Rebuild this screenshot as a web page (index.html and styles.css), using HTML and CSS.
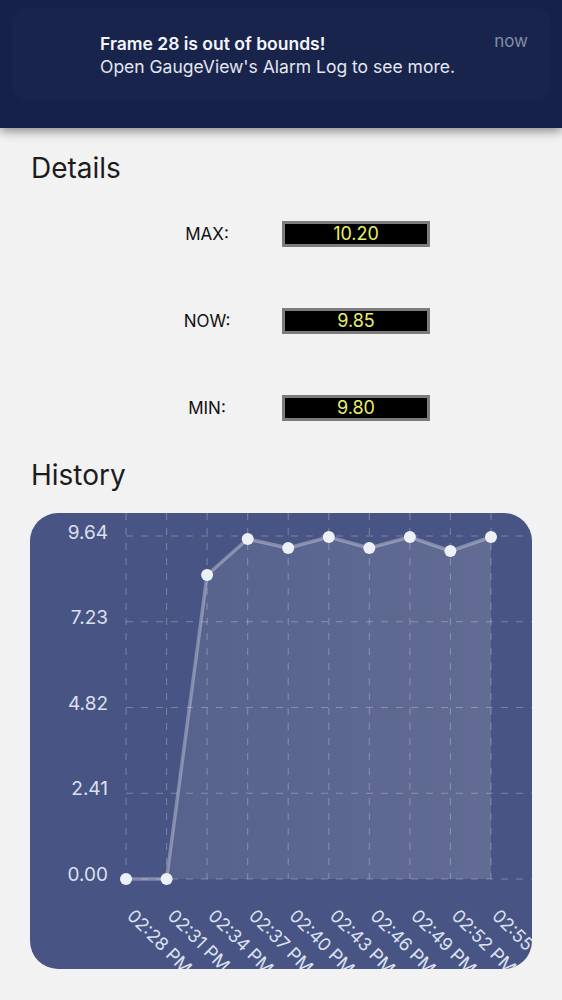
FILE: index.html
```html
<!DOCTYPE html>
<html lang="en">
<head>
    <meta charset="UTF-8">
    <meta name="viewport" content="width=device-width, initial-scale=1.0">
    <title>GaugeView - Frame 28</title>
    <link rel="stylesheet" href="styles.css">
</head>
<body>

<header class="banner">
    <div class="banner-card">
        <div class="banner-text">
            <div class="banner-title">Frame 28 is out of bounds!</div>
            <div class="banner-body">Open GaugeView's Alarm Log to see more.</div>
        </div>
        <div class="banner-time">now</div>
    </div>
</header>

<main class="content">
    <h2 class="section-title">Details</h2>

    <div class="readings">
        <div class="reading">
            <span class="reading-label">MAX:</span>
            <span class="reading-value">10.20</span>
        </div>
        <div class="reading">
            <span class="reading-label">NOW:</span>
            <span class="reading-value">9.85</span>
        </div>
        <div class="reading">
            <span class="reading-label">MIN:</span>
            <span class="reading-value">9.80</span>
        </div>
    </div>

    <h2 class="section-title history-title">History</h2>

    <div class="chart-card">
        <svg class="chart" width="502" height="456" viewBox="0 0 502 456">
            <defs>
                <linearGradient id="areaFill" x1="0" y1="0" x2="1" y2="0">
                    <stop offset="0" stop-color="#ffffff" stop-opacity="0.08"/>
                    <stop offset="1" stop-color="#ffffff" stop-opacity="0.14"/>
                </linearGradient>
            </defs>

            <!-- vertical grid -->
            <g class="grid">
                <line x1="96" y1="0" x2="96" y2="366"/>
                <line x1="136.6" y1="0" x2="136.6" y2="366"/>
                <line x1="177.1" y1="0" x2="177.1" y2="366"/>
                <line x1="217.7" y1="0" x2="217.7" y2="366"/>
                <line x1="258.2" y1="0" x2="258.2" y2="366"/>
                <line x1="298.8" y1="0" x2="298.8" y2="366"/>
                <line x1="339.3" y1="0" x2="339.3" y2="366"/>
                <line x1="379.9" y1="0" x2="379.9" y2="366"/>
                <line x1="420.4" y1="0" x2="420.4" y2="366"/>
                <line x1="461" y1="0" x2="461" y2="366"/>
            </g>

            <!-- horizontal grid -->
            <g class="grid">
                <line x1="96" y1="23" x2="502" y2="23"/>
                <line x1="96" y1="108.75" x2="502" y2="108.75"/>
                <line x1="96" y1="194.5" x2="502" y2="194.5"/>
                <line x1="96" y1="280.25" x2="502" y2="280.25"/>
                <line x1="96" y1="366" x2="502" y2="366"/>
            </g>

            <polygon class="area" points="136.6,366 177.1,62 217.7,26 258.2,35 298.8,24 339.3,35 379.9,24 420.4,38 461,24 461,366"/>
            <polyline class="line" points="96,366 136.6,366 177.1,62 217.7,26 258.2,35 298.8,24 339.3,35 379.9,24 420.4,38 461,24"/>

            <g class="dots">
                <circle cx="96" cy="366" r="6"/>
                <circle cx="136.6" cy="366" r="6"/>
                <circle cx="177.1" cy="62" r="6"/>
                <circle cx="217.7" cy="26" r="6"/>
                <circle cx="258.2" cy="35" r="6"/>
                <circle cx="298.8" cy="24" r="6"/>
                <circle cx="339.3" cy="35" r="6"/>
                <circle cx="379.9" cy="24" r="6"/>
                <circle cx="420.4" cy="38" r="6"/>
                <circle cx="461" cy="24" r="6"/>
            </g>

            <g class="y-labels">
                <text x="78" y="21">9.64</text>
                <text x="78" y="106">7.23</text>
                <text x="78" y="192">4.82</text>
                <text x="78" y="277">2.41</text>
                <text x="78" y="363">0.00</text>
            </g>

            <g class="x-labels">
                <text x="96" y="404" transform="rotate(45 96 404)">02:28 PM</text>
                <text x="136.6" y="404" transform="rotate(45 136.6 404)">02:31 PM</text>
                <text x="177.1" y="404" transform="rotate(45 177.1 404)">02:34 PM</text>
                <text x="217.7" y="404" transform="rotate(45 217.7 404)">02:37 PM</text>
                <text x="258.2" y="404" transform="rotate(45 258.2 404)">02:40 PM</text>
                <text x="298.8" y="404" transform="rotate(45 298.8 404)">02:43 PM</text>
                <text x="339.3" y="404" transform="rotate(45 339.3 404)">02:46 PM</text>
                <text x="379.9" y="404" transform="rotate(45 379.9 404)">02:49 PM</text>
                <text x="420.4" y="404" transform="rotate(45 420.4 404)">02:52 PM</text>
                <text x="461" y="404" transform="rotate(45 461 404)">02:55 PM</text>
            </g>
        </svg>
    </div>
</main>

</body>
</html>
```

FILE: styles.css
```css
* {
    box-sizing: border-box;
}
body {
    margin: 0;
    font-family: Inter, 'Noto Sans', sans-serif;
    background-color: #f2f2f2;
    width: 562px;
    height: 1000px;
    overflow: hidden;
}

/* notification banner */
.banner {
    height: 128px;
    background-color: #16214a;
    box-shadow: 0 3px 10px rgba(0,0,0,0.45);
    padding: 8px 12px 0;
    position: relative;
}
.banner-card {
    display: flex;
    justify-content: space-between;
    height: 92px;
    padding: 24px 22px 0 88px;
    border-radius: 14px;
    background: rgba(255,255,255,0.015);
}
.banner-title {
    color: #f4f5f9;
    font-size: 17.5px;
    font-weight: 600;
    line-height: 23px;
}
.banner-body {
    color: #e3e6ef;
    font-size: 17.5px;
    line-height: 23px;
}
.banner-time {
    color: #848ca8;
    font-size: 17px;
    line-height: 22px;
    margin-top: -2px;
}

/* page */
.content {
    padding: 0 30px;
}
.section-title {
    margin: 23px 0 0 1px;
    font-size: 28px;
    line-height: 34px;
    font-weight: 400;
    color: #1c1c1c;
}
.readings {
    display: flex;
    flex-direction: column;
    gap: 61px;
    margin-top: 36px;
}
.reading {
    display: flex;
    align-items: center;
    padding-left: 102px;
    height: 26px;
}
.reading-label {
    width: 150px;
    text-align: center;
    font-size: 17px;
    color: #111;
}
.reading-value {
    width: 148px;
    height: 26px;
    border: 3px solid #7c7c7c;
    background: #000;
    color: #e8f06a;
    font-size: 18px;
    line-height: 20px;
    text-align: center;
}
.history-title {
    margin-top: 37px;
}

/* chart */
.chart-card {
    margin-top: 21px;
    width: 502px;
    height: 456px;
    border-radius: 28px;
    overflow: hidden;
    background-color: #485483;
}
.chart {
    display: block;
}
.grid line {
    stroke: rgba(255,255,255,0.28);
    stroke-width: 1;
    stroke-dasharray: 7 8;
}
.area {
    fill: url(#areaFill);
}
.line {
    fill: none;
    stroke: rgba(255,255,255,0.32);
    stroke-width: 3.5;
    stroke-linejoin: round;
}
.dots circle {
    fill: #eef0f7;
}
.y-labels text {
    fill: #dbe0ee;
    font-family: Inter, 'Noto Sans', sans-serif;
    font-size: 19px;
    text-anchor: end;
    dominant-baseline: middle;
}
.x-labels text {
    fill: #dbe0ee;
    font-family: Inter, 'Noto Sans', sans-serif;
    font-size: 18px;
}
```
